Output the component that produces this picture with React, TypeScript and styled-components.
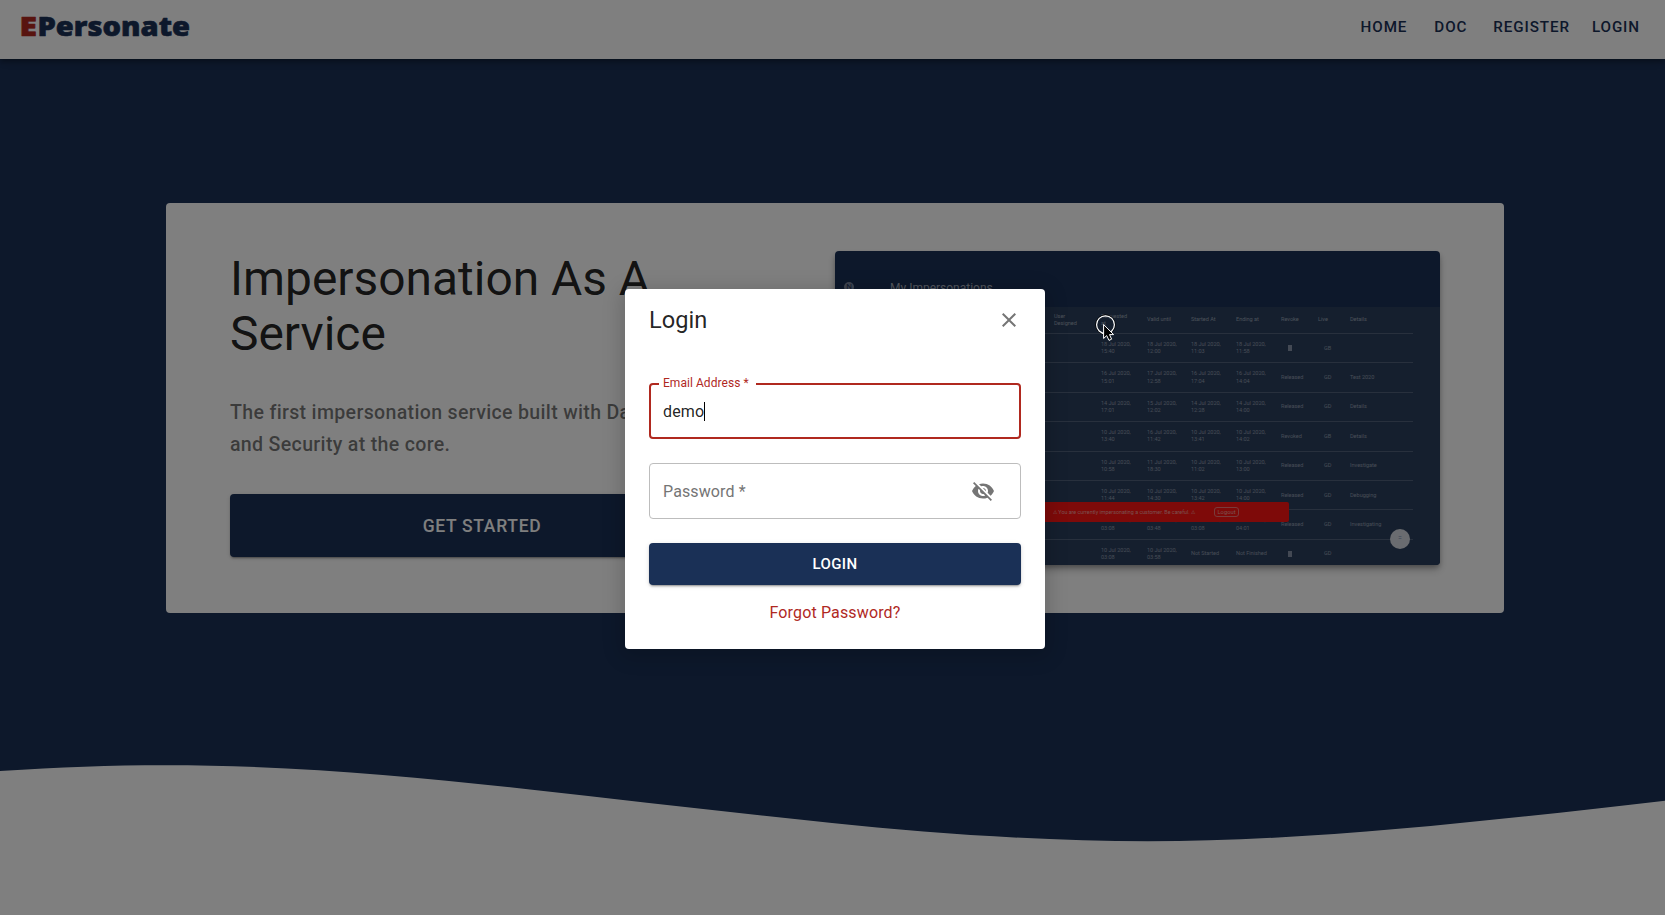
import React from 'react';
import styled, { createGlobalStyle } from 'styled-components';
import { MdClose, MdVisibilityOff } from 'react-icons/md';

const navy = '#1a3056';
const red = '#b0291f';

const GlobalStyle = createGlobalStyle`
  *, *::before, *::after { box-sizing: border-box; }
  html, body { margin: 0; height: 100%; overflow: hidden; }
  body { font-family: Roboto, "Liberation Sans", sans-serif; background: #fff; color: rgba(0, 0, 0, 0.87); }
  h1, h2, p { margin: 0; font-weight: 400; }
`;

const Page = styled.div`
  position: relative;
  height: 915px;
  display: flex;
  flex-direction: column;
  overflow: hidden;
`;

const Header = styled.header`
  flex: none;
  height: 59px;
  padding: 0 25px 6px 20px;
  display: flex;
  align-items: center;
  justify-content: space-between;
  background: #fff;
  z-index: 1;
  box-shadow: 0 2px 4px -1px rgba(0, 0, 0, 0.2), 0 4px 5px rgba(0, 0, 0, 0.14), 0 1px 10px rgba(0, 0, 0, 0.12);
`;

const Logo = styled.svg`
  display: block;
  width: 180px;
  height: 40px;
  font: 800 26px "Open Sans", sans-serif;
  stroke-width: 0.6px;
  stroke-linejoin: round;
`;

const Nav = styled.nav`
  display: flex;
`;

const NavLink = styled.a<{ $gap?: number }>`
  margin-left: ${(p) => p.$gap ?? 0}px;
  font-size: 15.2px;
  font-weight: 500;
  line-height: 26px;
  letter-spacing: 0.9px;
  color: ${navy};
`;

const Hero = styled.main`
  flex: 1;
  display: flex;
  flex-direction: column;
  align-items: center;
  justify-content: space-between;
  padding-top: 144px;
  background: ${navy};
`;

const Card = styled.section`
  width: 1338px;
  height: 410px;
  margin-right: -5px;
  padding: 48px 64px 0 64px;
  display: flex;
  justify-content: space-between;
  align-items: flex-start;
  background: #fff;
  border-radius: 4px;
`;

const Intro = styled.div`
  width: 504px;
`;

const Headline = styled.h1`
  padding-top: 1px;
  font-size: 47.9px;
  line-height: 55px;
  width: 440px;
`;

const Lead = styled.p`
  width: 504px;
  margin-top: 35px;
  font-size: 19.6px;
  font-weight: 500;
  line-height: 32px;
  letter-spacing: 0.31px;
  color: rgba(0, 0, 0, 0.54);
`;

const buttonShadow = '0 3px 1px -2px rgba(0,0,0,.2), 0 2px 2px rgba(0,0,0,.14), 0 1px 5px rgba(0,0,0,.12)';

const StartButton = styled.div`
  height: 63px;
  margin-top: 33px;
  display: flex;
  align-items: center;
  justify-content: center;
  border-radius: 4px;
  background: ${navy};
  color: #fff;
  font-size: 17.5px;
  font-weight: 500;
  letter-spacing: 0.7px;
  box-shadow: ${buttonShadow};
`;

const Preview = styled.div`
  position: relative;
  width: 605px;
  height: 314px;
  overflow: hidden;
  border-radius: 4px;
  background: ${navy};
  color: #a4abb8;
`;

const PreviewFrame = styled.div`
  border-radius: 4px;
  box-shadow: 0 3px 5px -1px rgba(0,0,0,.3), 0 5px 8px rgba(0,0,0,.2);
`;

const PreviewBar = styled.div`
  height: 56px;
  padding: 31px 0 0 9px;
  display: flex;
  align-items: flex-start;
  font-size: 12px;
  line-height: 12px;
`;

const Badge = styled.span`
  width: 10px;
  height: 10px;
  margin-right: 36px;
  border-radius: 50%;
  background: #7d89a0;
  color: ${navy};
  font-size: 8px;
  line-height: 10px;
  text-align: center;
`;

const Table = styled.div`
  margin-left: 28px;
  padding-right: 27px;
  height: 258px;
  background: #2b3f5c;
`;

const Row = styled.div<{ $head?: boolean }>`
  height: ${(p) => (p.$head ? 27 : 29.4)}px;
  display: grid;
  grid-template-columns: 238px 46px 44px 45px 45px 37px 32px 1fr;
  align-items: center;
  border-bottom: 1px solid #50617b;
  font-size: 5.6px;
  line-height: 7.2px;
  letter-spacing: -0.05px;
  color: ${(p) => (p.$head ? '#97a2b3' : '#8e9aad')};
  white-space: pre;
`;

const UserCell = styled.span`
  padding-left: 191px;
`;

const Glyph = styled.i`
  display: block;
  width: 4px;
  height: 6px;
  margin-left: 7px;
  background: #8793a8;
`;

const Shift = styled.span`
  padding-left: 6px;
`;

const Warning = styled.div`
  position: absolute;
  left: 150px;
  top: 251px;
  width: 304px;
  height: 20px;
  padding: 0 50px 0 0;
  display: flex;
  align-items: center;
  justify-content: flex-end;
  gap: 19px;
  border-radius: 2px;
  background: #fd1512;
  color: #f5a0a0;
  font-size: 5.35px;
  white-space: nowrap;
`;

const Logout = styled.span`
  width: 25px;
  height: 10px;
  border: 1px solid #f37777;
  border-radius: 3px;
  font-size: 5.8px;
  line-height: 8px;
  text-align: center;
`;

const Fab = styled.div`
  position: absolute;
  left: 555px;
  top: 278px;
  width: 20px;
  height: 20px;
  border-radius: 50%;
  background: #d5d9e0;
  color: #6f86ae;
  font-size: 7px;
  line-height: 19px;
  text-align: center;
`;

const Wave = styled.svg`
  display: block;
  flex: none;
  width: 1665px;
  height: 155px;
`;

const Backdrop = styled.div`
  position: absolute;
  inset: 0;
  z-index: 2;
  padding: 289px 0 0 625px;
  background: rgba(0, 0, 0, 0.5);
`;

const Dialog = styled.div`
  width: 420px;
  height: 360px;
  padding: 15px 24px 0;
  display: flex;
  flex-direction: column;
  border-radius: 4px;
  background: #fff;
  box-shadow: 0 4px 20px 4px rgba(0, 0, 0, 0.16);
`;

const DialogHead = styled.div`
  height: 32px;
  margin-bottom: 47px;
  display: flex;
  align-items: center;
  justify-content: space-between;
  color: #757575;
`;

const DialogTitle = styled.h2`
  font-size: 23.6px;
  line-height: 32px;
  color: rgba(0, 0, 0, 0.87);
`;

const Field = styled.div<{ $active?: boolean }>`
  flex: none;
  height: 56px;
  margin-bottom: 24px;
  padding: 0 ${(p) => (p.$active ? 12 : 25)}px 0 ${(p) => (p.$active ? 12 : 13)}px;
  display: flex;
  align-items: center;
  justify-content: space-between;
  border: ${(p) => (p.$active ? `2px solid ${red}` : '1px solid #bdbdbd')};
  border-radius: 4px;
  position: relative;
  font-size: 16px;
  letter-spacing: 0.12px;
  color: ${(p) => (p.$active ? 'rgba(0,0,0,.87)' : '#757575')};
`;

const FieldLabel = styled.span`
  position: absolute;
  top: -9px;
  left: 8px;
  width: 97px;
  padding-left: 4px;
  background: #fff;
  font-size: 12px;
  line-height: 14px;
  letter-spacing: 0.05px;
  color: ${red};
`;

const Value = styled.span`
  height: 19px;
  line-height: 19px;
  border-right: 1px solid #000;
`;

const LoginButton = styled.div`
  height: 42px;
  display: flex;
  align-items: center;
  justify-content: center;
  border-radius: 4px;
  background: ${navy};
  color: #fff;
  font-size: 15px;
  font-weight: 500;
  letter-spacing: 0.4px;
  box-shadow: ${buttonShadow};
`;

const Forgot = styled.a`
  margin-top: 16px;
  text-align: center;
  font-size: 16px;
  line-height: 24px;
  letter-spacing: 0.15px;
  color: ${red};
`;

const Pointer = styled.svg`
  position: absolute;
  left: 1094px;
  top: 313px;
  width: 24px;
  height: 32px;
`;

const rows = [
  ['18 Jul 2020,\n15:40', '18 Jul 2020,\n12:00', '18 Jul 2020,\n11:03', '18 Jul 2020,\n11:58', '', 'GB', ''],
  ['16 Jul 2020,\n15:01', '17 Jul 2020,\n12:58', '16 Jul 2020,\n17:04', '16 Jul 2020,\n14:04', 'Released', 'GD', 'Test 2020'],
  ['14 Jul 2020,\n17:01', '15 Jul 2020,\n12:02', '14 Jul 2020,\n12:28', '14 Jul 2020,\n14:00', 'Released', 'GD', 'Details'],
  ['10 Jul 2020,\n13:40', '16 Jul 2020,\n11:42', '10 Jul 2020,\n13:41', '10 Jul 2020,\n14:02', 'Revoked', 'GB', 'Details'],
  ['10 Jul 2020,\n10:58', '11 Jul 2020,\n18:30', '10 Jul 2020,\n11:02', '10 Jul 2020,\n13:00', 'Released', 'GD', 'Investigate'],
  ['10 Jul 2020,\n11:44', '10 Jul 2020,\n14:30', '10 Jul 2020,\n13:42', '10 Jul 2020,\n14:00', 'Released', 'GD', 'Debugging'],
  ['10 Jul 2020,\n03:08', '10 Jul 2020,\n03:48', '10 Jul 2020,\n03:08', '10 Jul 2020,\n04:01', 'Released', 'GD', 'Investigating'],
  ['10 Jul 2020,\n03:08', '10 Jul 2020,\n03:58', 'Not Started', 'Not Finished', '', 'GD', ''],
];

export default function App() {
  return (
    <Page>
      <GlobalStyle />
      <Header>
        <Logo viewBox="0 0 180 40">
          <text x="-0.5" y="28.8" fill={red} stroke={red} textLength="17.5" lengthAdjust="spacingAndGlyphs">
            E
          </text>
          <text x="17.5" y="28.8" fill={navy} stroke={navy} textLength="152.5" lengthAdjust="spacingAndGlyphs">
            Personate
          </text>
        </Logo>
        <Nav>
          <NavLink>HOME</NavLink>
          <NavLink $gap={27}>DOC</NavLink>
          <NavLink $gap={26}>REGISTER</NavLink>
          <NavLink $gap={22}>LOGIN</NavLink>
        </Nav>
      </Header>
      <Hero>
        <Card>
          <Intro>
            <Headline>Impersonation As A Service</Headline>
            <Lead>The first impersonation service built with Data Privacy and Security at the core.</Lead>
            <StartButton>GET STARTED</StartButton>
          </Intro>
          <PreviewFrame>
            <Preview>
              <PreviewBar>
                <Badge>N</Badge>
                My Impersonations
              </PreviewBar>
              <Table>
                <Row $head>
                  <UserCell>{'User\nDesigned'}</UserCell>
                  <span>{'Requested\nat'}</span>
                  <span>Valid until</span>
                  <span>Started At</span>
                  <span>Ending at</span>
                  <span>Revoke</span>
                  <span>Live</span>
                  <span>Details</span>
                </Row>
                {rows.map((row, i) => (
                  <Row key={i}>
                    <span />
                    {row.map((cell, j) => {
                      if (j === 4 && !cell) return <Glyph key={j} />;
                      return j === 5 ? <Shift key={j}>{cell}</Shift> : <span key={j}>{cell}</span>;
                    })}
                  </Row>
                ))}
              </Table>
              <Warning>
                ⚠ You are currently impersonating a customer. Be careful. ⚠
                <Logout>Logout</Logout>
              </Warning>
              <Fab>=</Fab>
            </Preview>
          </PreviewFrame>
        </Card>
        <Wave viewBox="0 760 1665 155">
          <path
            fill="#fff"
            d="M0 771C60 767 110 765.2 165 765.2C290 765.2 410 776.1 530 789.5C630 800.7 732 812.5 832 823C932 833.5 1045 841.2 1148 841.2C1320 841.2 1500 819.5 1665 800.7V915H0Z"
          />
        </Wave>
      </Hero>
      <Backdrop>
        <Dialog>
          <DialogHead>
            <DialogTitle>Login</DialogTitle>
            <MdClose size={24} />
          </DialogHead>
          <Field $active>
            <FieldLabel>Email Address *</FieldLabel>
            <Value>demo</Value>
          </Field>
          <Field>
            Password *
            <MdVisibilityOff size={24} />
          </Field>
          <LoginButton>LOGIN</LoginButton>
          <Forgot>Forgot Password?</Forgot>
        </Dialog>
        <Pointer viewBox="0 0 24 32">
          <circle cx="11.5" cy="11.7" r="9.8" fill="none" stroke="#000" strokeWidth="1" />
          <circle cx="11.5" cy="11.7" r="8.9" fill="none" stroke="#fff" strokeWidth="1.2" />
          <path d="M9.6 11.5V25.5L12.7 22.6L15 27.4L17.6 26.2L15.5 21.6H19.6Z" fill="#000" stroke="#fff" strokeWidth="1" />
        </Pointer>
      </Backdrop>
    </Page>
  );
}
